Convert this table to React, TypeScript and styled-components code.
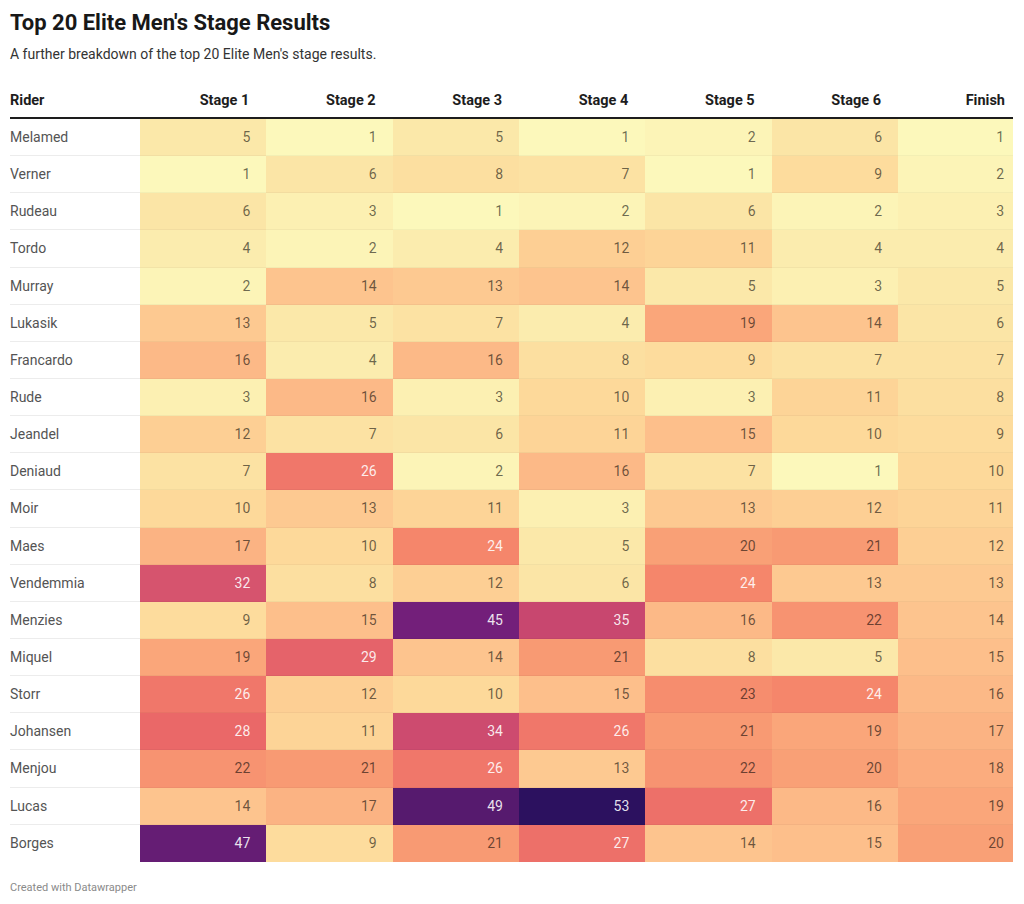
import React from "react";
import styled, { createGlobalStyle } from "styled-components";

const GlobalStyle = createGlobalStyle`
  html, body { margin: 0; padding: 0; background: #ffffff; }
  body { font-family: Roboto, "Liberation Sans", Arial, sans-serif; }
`;

const Page = styled.div`
  padding: 9px 11px 0 10px;
  width: 1003px;
`;

const Title = styled.h1`
  margin: 0;
  font-size: 22px;
  line-height: 28px;
  font-weight: 700;
  color: #181818;
`;

const Subtitle = styled.p`
  margin: 7px 0 0;
  font-size: 14px;
  line-height: 20px;
  color: #333333;
`;

const Table = styled.div`
  margin-top: 19px;
  display: grid;
  grid-template-columns: 130px repeat(6, 1fr) 115px;
`;

const HeadRow = styled.div`
  display: contents;
`;

const HeadCell = styled.div<{ $align: "left" | "right"; $pad: number }>`
  height: 34px;
  display: flex;
  align-items: center;
  justify-content: ${(p) => (p.$align === "left" ? "flex-start" : "flex-end")};
  padding-right: ${(p) => p.$pad}px;
  font-size: 14.5px;
  font-weight: 700;
  color: #1d1d1d;
  border-bottom: 2px solid #1d1d1d;
`;

const NameCell = styled.div<{ $last: boolean }>`
  height: 37.15px;
  box-sizing: border-box;
  display: flex;
  align-items: center;
  font-size: 14px;
  color: #545454;
  border-bottom: ${(p) => (p.$last ? "none" : "1px solid #ececec")};
`;

const ValueCell = styled.div<{ $bg: string; $dark: boolean; $pad: number; $last: boolean }>`
  height: 37.15px;
  box-sizing: border-box;
  display: flex;
  align-items: center;
  justify-content: flex-end;
  padding-right: ${(p) => p.$pad}px;
  font-size: 14px;
  background: ${(p) => p.$bg};
  color: ${(p) => (p.$dark ? "rgba(255,255,255,0.88)" : "rgba(0,0,0,0.58)")};
  border-bottom: ${(p) => (p.$last ? "none" : "1px solid rgba(0,0,0,0.035)")};
`;

const Footer = styled.div`
  margin-top: 19px;
  font-size: 11px;
  color: #8a8a8a;
`;

const headers = ["Stage 1", "Stage 2", "Stage 3", "Stage 4", "Stage 5", "Stage 6", "Finish"];

const rows: [string, number[]][] = [
  ["Melamed", [5, 1, 5, 1, 2, 6, 1]],
  ["Verner", [1, 6, 8, 7, 1, 9, 2]],
  ["Rudeau", [6, 3, 1, 2, 6, 2, 3]],
  ["Tordo", [4, 2, 4, 12, 11, 4, 4]],
  ["Murray", [2, 14, 13, 14, 5, 3, 5]],
  ["Lukasik", [13, 5, 7, 4, 19, 14, 6]],
  ["Francardo", [16, 4, 16, 8, 9, 7, 7]],
  ["Rude", [3, 16, 3, 10, 3, 11, 8]],
  ["Jeandel", [12, 7, 6, 11, 15, 10, 9]],
  ["Deniaud", [7, 26, 2, 16, 7, 1, 10]],
  ["Moir", [10, 13, 11, 3, 13, 12, 11]],
  ["Maes", [17, 10, 24, 5, 20, 21, 12]],
  ["Vendemmia", [32, 8, 12, 6, 24, 13, 13]],
  ["Menzies", [9, 15, 45, 35, 16, 22, 14]],
  ["Miquel", [19, 29, 14, 21, 8, 5, 15]],
  ["Storr", [26, 12, 10, 15, 23, 24, 16]],
  ["Johansen", [28, 11, 34, 26, 21, 19, 17]],
  ["Menjou", [22, 21, 26, 13, 22, 20, 18]],
  ["Lucas", [14, 17, 49, 53, 27, 16, 19]],
  ["Borges", [47, 9, 21, 27, 14, 15, 20]],
];

const anchors: [number, string][] = [
  [1, "#fcf8bb"],
  [5, "#fbe8a9"],
  [10, "#fdd99a"],
  [15, "#fdbf8b"],
  [20, "#f9a076"],
  [24, "#f5866b"],
  [28, "#ea6868"],
  [32, "#d6546e"],
  [35, "#c8476f"],
  [40, "#a03378"],
  [45, "#731f7a"],
  [49, "#561a6e"],
  [53, "#2c115f"],
];

const hex = (h: string) => [1, 3, 5].map((i) => parseInt(h.slice(i, i + 2), 16));

function colorFor(v: number): string {
  for (let i = 0; i < anchors.length - 1; i++) {
    const [a, ca] = anchors[i];
    const [b, cb] = anchors[i + 1];
    if (v >= a && v <= b) {
      const t = (v - a) / (b - a);
      const x = hex(ca);
      const y = hex(cb);
      const c = x.map((n, k) => Math.round(n + (y[k] - n) * t));
      return `rgb(${c[0]},${c[1]},${c[2]})`;
    }
  }
  return anchors[anchors.length - 1][1];
}

export default function App() {
  return (
    <>
      <GlobalStyle />
      <Page>
        <Title>Top 20 Elite Men's Stage Results</Title>
        <Subtitle>A further breakdown of the top 20 Elite Men's stage results.</Subtitle>
        <Table>
          <HeadRow>
            <HeadCell $align="left" $pad={0}>Rider</HeadCell>
            {headers.map((h, i) => (
              <HeadCell key={h} $align="right" $pad={i === 6 ? 8 : 17}>
                {h}
              </HeadCell>
            ))}
          </HeadRow>
          {rows.map(([name, vals], r) => (
            <React.Fragment key={name}>
              <NameCell $last={r === rows.length - 1}>{name}</NameCell>
              {vals.map((v, i) => (
                <ValueCell
                  key={i}
                  $bg={colorFor(v)}
                  $dark={v >= 24}
                  $pad={i === 6 ? 9 : 16}
                  $last={r === rows.length - 1}
                >
                  {v}
                </ValueCell>
              ))}
            </React.Fragment>
          ))}
        </Table>
        <Footer>Created with Datawrapper</Footer>
      </Page>
    </>
  );
}
